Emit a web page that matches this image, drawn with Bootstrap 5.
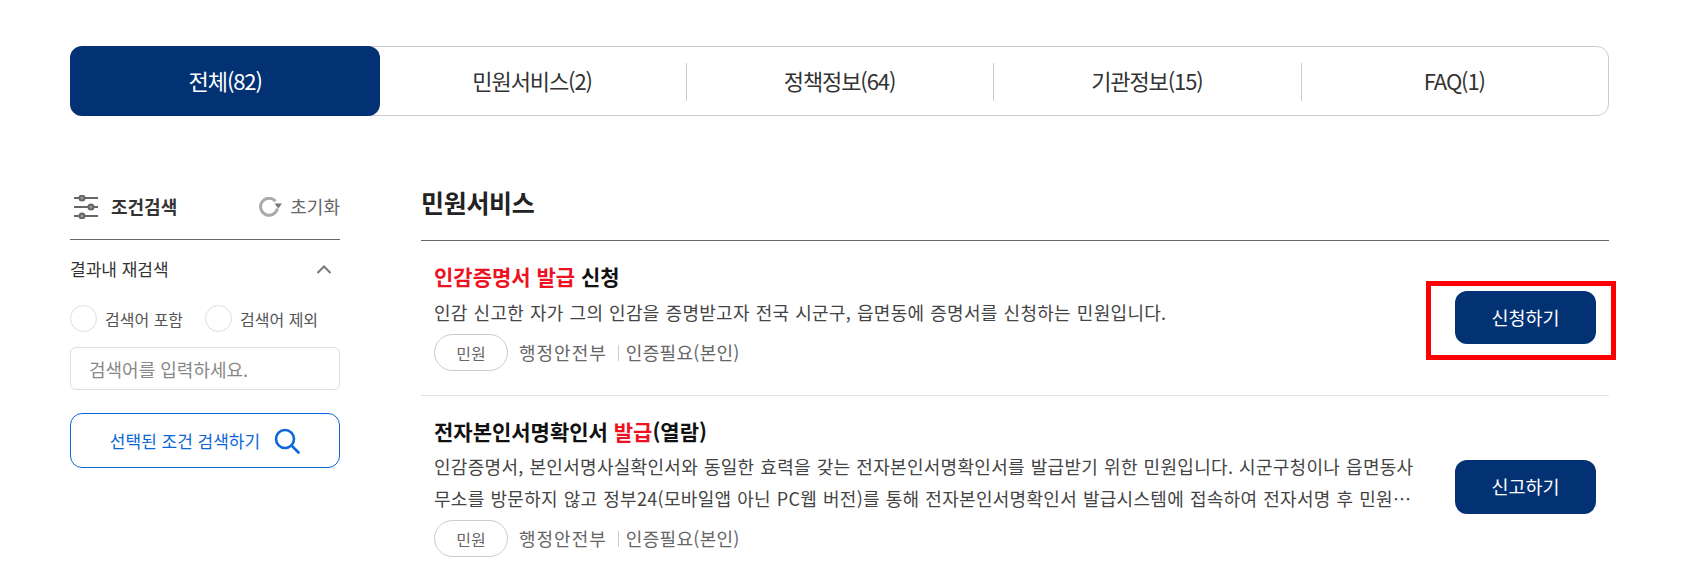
<!DOCTYPE html>
<html lang="ko">
<head>
  <meta charset="UTF-8">
  <meta name="viewport" content="width=device-width, initial-scale=1.0">
  <title>통합검색</title>
  <link href="https://cdn.jsdelivr.net/npm/bootstrap@5.3.0/dist/css/bootstrap.min.css" rel="stylesheet">
  <style>
    html, body { height: 575px; overflow: hidden; }
    body { font-family: "Noto Sans CJK KR", "Noto Sans", sans-serif; color: #222; background: #fff; }
    .page-wrap { padding: 46px 88px 0 70px; }

    .result-tabs { height: 70px; border: 1px solid #ccc; border-radius: 12px; }
    .result-tabs .nav-item { position: relative; flex: 1 1 0; }
    .result-tabs .nav-item + .nav-item::before { content: ""; position: absolute; left: 0; top: 16px; height: 38px; border-left: 1px solid #ccc; }
    .result-tabs .nav-item:nth-child(2)::before { display: none; }
    .result-tabs .nav-link { height: 100%; display: flex; align-items: center; justify-content: center; font-size: 22px; letter-spacing: -1.1px; color: #333; padding: 0 0 2px; }
    .result-tabs .nav-link.active { background: #033274; color: #fff; border-radius: 12px; margin: -1px -2px -1px -1px; height: 70px; position: relative; z-index: 1; }

    .filter-col { width: 270px; flex: none; margin-right: 81px; }
    .filter-head { height: 60px; border-bottom: 1px solid #666; padding-bottom: 6px; }
    .filter-title { font-size: 18px; font-weight: 700; color: #333; margin-left: 13px; }
    .reset-text { font-size: 18px; color: #666; margin-left: 8px; }
    .retry-head { height: 58px; font-size: 17px; color: #333; }
    .radio-row { height: 27px; margin-top: 7px; font-size: 16px; color: #555; }
    .radio-dot { width: 27px; height: 27px; margin: 0 8px 0 0; border: 1px solid #ddd; border-radius: 50%; background: #fff; appearance: none; }
    .keyword-input { height: 43px; margin-top: 15px; padding: 0 18px; font-size: 18px; border: 1px solid #ddd; border-radius: 6px; }
    .keyword-input::placeholder { color: #888; }
    .search-btn { height: 55px; margin-top: 23px; font-size: 17px; color: #0b66d6; border: 1px solid #0b66d6; border-radius: 12px; background: #fff; }
    .search-btn svg { margin-left: 14px; }

    .list-title { height: 61px; margin: 0; font-size: 25px; font-weight: 700; line-height: 44px; border-bottom: 1px solid #666; letter-spacing: -.3px; color: #222; }
    .result-row { height: 155px; padding: 17px 13px 0; border-bottom: 1px solid #e2e2e2; }
    .result-row.is-tall { border-bottom: 0; }
    .result-name { margin: 0 0 2px; font-size: 21px; font-weight: 700; line-height: 36px; color: #111; }
    .result-name em { font-style: normal; color: #ee1122; }
    .result-desc { margin: 0; width: 990px; font-size: 18px; line-height: 32px; color: #444; word-break: break-all; letter-spacing: .3px; word-spacing: .5px; }
    .result-meta { margin-top: 6px; font-size: 18px; color: #666; letter-spacing: .3px; }
    .is-tall .result-name { margin-bottom: 1px; }
    .org-name { letter-spacing: 1px; }
    .kind-chip { width: 74px; height: 37px; margin-right: 11px; font-size: 16px; letter-spacing: 0; color: #666; border: 1px solid #ccc; border-radius: 19px; }
    .meta-sep { height: 16px; margin: 0 7px 0 11px; border-left: 1px solid #ccc; }
    .apply-wrap { position: relative; flex: none; margin-top: 33px; }
    .apply-btn { width: 141px; height: 53px; font-size: 18.500px; color: #fff; background: #033274; border: 0; border-radius: 12px; }
    .apply-btn:hover { color: #fff; background: #033274; }
    .mark-box { position: absolute; left: -29px; top: -10px; width: 190px; height: 79px; border: 5px solid #f00; pointer-events: none; }
    .is-tall .apply-wrap { margin-top: 47px; }
    .is-tall .apply-btn { height: 54px; }
  </style>
</head>
<body>
<div class="page-wrap">
  <ul class="nav result-tabs">
    <li class="nav-item"><a class="nav-link active" href="#">전체(82)</a></li>
    <li class="nav-item"><a class="nav-link" href="#">민원서비스(2)</a></li>
    <li class="nav-item"><a class="nav-link" href="#">정책정보(64)</a></li>
    <li class="nav-item"><a class="nav-link" href="#">기관정보(15)</a></li>
    <li class="nav-item"><a class="nav-link" href="#">FAQ(1)</a></li>
  </ul>

  <div class="d-flex" style="margin-top:64px">
    <aside class="filter-col">
      <div class="filter-head d-flex align-items-center">
        <svg class="ms-1" width="24" height="24" viewBox="0 0 24 24" fill="none" stroke="#666" stroke-width="2">
          <path d="M0 3h24M0 12h24M0 21h24"/>
          <circle cx="8" cy="3" r="2.500" fill="#999"/><circle cx="17" cy="12" r="2.500" fill="#999"/><circle cx="8" cy="21" r="2.500" fill="#999"/>
        </svg>
        <span class="filter-title">조건검색</span>
        <span class="ms-auto d-flex align-items-center">
          <svg width="23" height="20" viewBox="0 0 23 20" fill="none">
            <path d="M16.500 4.200A8.500 8.500 0 1 0 18.400 11.500" stroke="#aaa" stroke-width="3"/>
            <path d="M15.500 6.500h7.500l-3.700 5z" fill="#777"/>
          </svg>
          <span class="reset-text">초기화</span>
        </span>
      </div>
      <div class="retry-head d-flex align-items-center justify-content-between">
        <span>결과내 재검색</span>
        <svg class="me-2" width="16" height="9" viewBox="0 0 16 9" fill="none" stroke="#777" stroke-width="2"><path d="M1.500 8L8 1.500 14.500 8"/></svg>
      </div>
      <div class="radio-row d-flex align-items-center">
        <input class="radio-dot" type="radio" name="scope" id="scopeIn">
        <label for="scopeIn" style="width:100px">검색어 포함</label>
        <input class="radio-dot" type="radio" name="scope" id="scopeOut">
        <label for="scopeOut">검색어 제외</label>
      </div>
      <input type="text" class="form-control keyword-input" placeholder="검색어를 입력하세요.">
      <button type="button" class="btn search-btn w-100 d-flex align-items-center justify-content-center">
        선택된 조건 검색하기
        <svg width="26" height="26" viewBox="0 0 26 26" fill="none" stroke="#0b66d6" stroke-width="2.600"><circle cx="11" cy="11" r="9"/><path d="M17.500 17.500L24.500 24.500" stroke-linecap="round"/></svg>
      </button>
    </aside>

    <main class="flex-grow-1">
      <h2 class="list-title">민원서비스</h2>

      <div class="result-row d-flex justify-content-between">
        <div>
          <h3 class="result-name"><em>인감증명서 발급</em> 신청</h3>
          <p class="result-desc">인감 신고한 자가 그의 인감을 증명받고자 전국 시군구, 읍면동에 증명서를 신청하는 민원입니다.</p>
          <div class="result-meta d-flex align-items-center">
            <span class="kind-chip d-flex align-items-center justify-content-center">민원</span>
            <span class="org-name">행정안전부</span><span class="meta-sep"></span><span>인증필요(본인)</span>
          </div>
        </div>
        <div class="apply-wrap">
          <a class="btn apply-btn d-flex align-items-center justify-content-center" href="#">신청하기</a>
          <span class="mark-box"></span>
        </div>
      </div>

      <div class="result-row is-tall d-flex justify-content-between">
        <div>
          <h3 class="result-name">전자본인서명확인서 <em>발급</em>(열람)</h3>
          <p class="result-desc">인감증명서, 본인서명사실확인서와 동일한 효력을 갖는 전자본인서명확인서를 발급받기 위한 민원입니다. 시군구청이나 읍면동사무소를 방문하지 않고 정부24(모바일앱 아닌 PC웹 버전)를 통해 전자본인서명확인서 발급시스템에 접속하여 전자서명 후 민원…</p>
          <div class="result-meta d-flex align-items-center">
            <span class="kind-chip d-flex align-items-center justify-content-center">민원</span>
            <span class="org-name">행정안전부</span><span class="meta-sep"></span><span>인증필요(본인)</span>
          </div>
        </div>
        <div class="apply-wrap">
          <a class="btn apply-btn d-flex align-items-center justify-content-center" href="#">신고하기</a>
        </div>
      </div>
    </main>
  </div>
</div>
<script src="https://cdn.jsdelivr.net/npm/bootstrap@5.3.0/dist/js/bootstrap.bundle.min.js"></script>
</body>
</html>
